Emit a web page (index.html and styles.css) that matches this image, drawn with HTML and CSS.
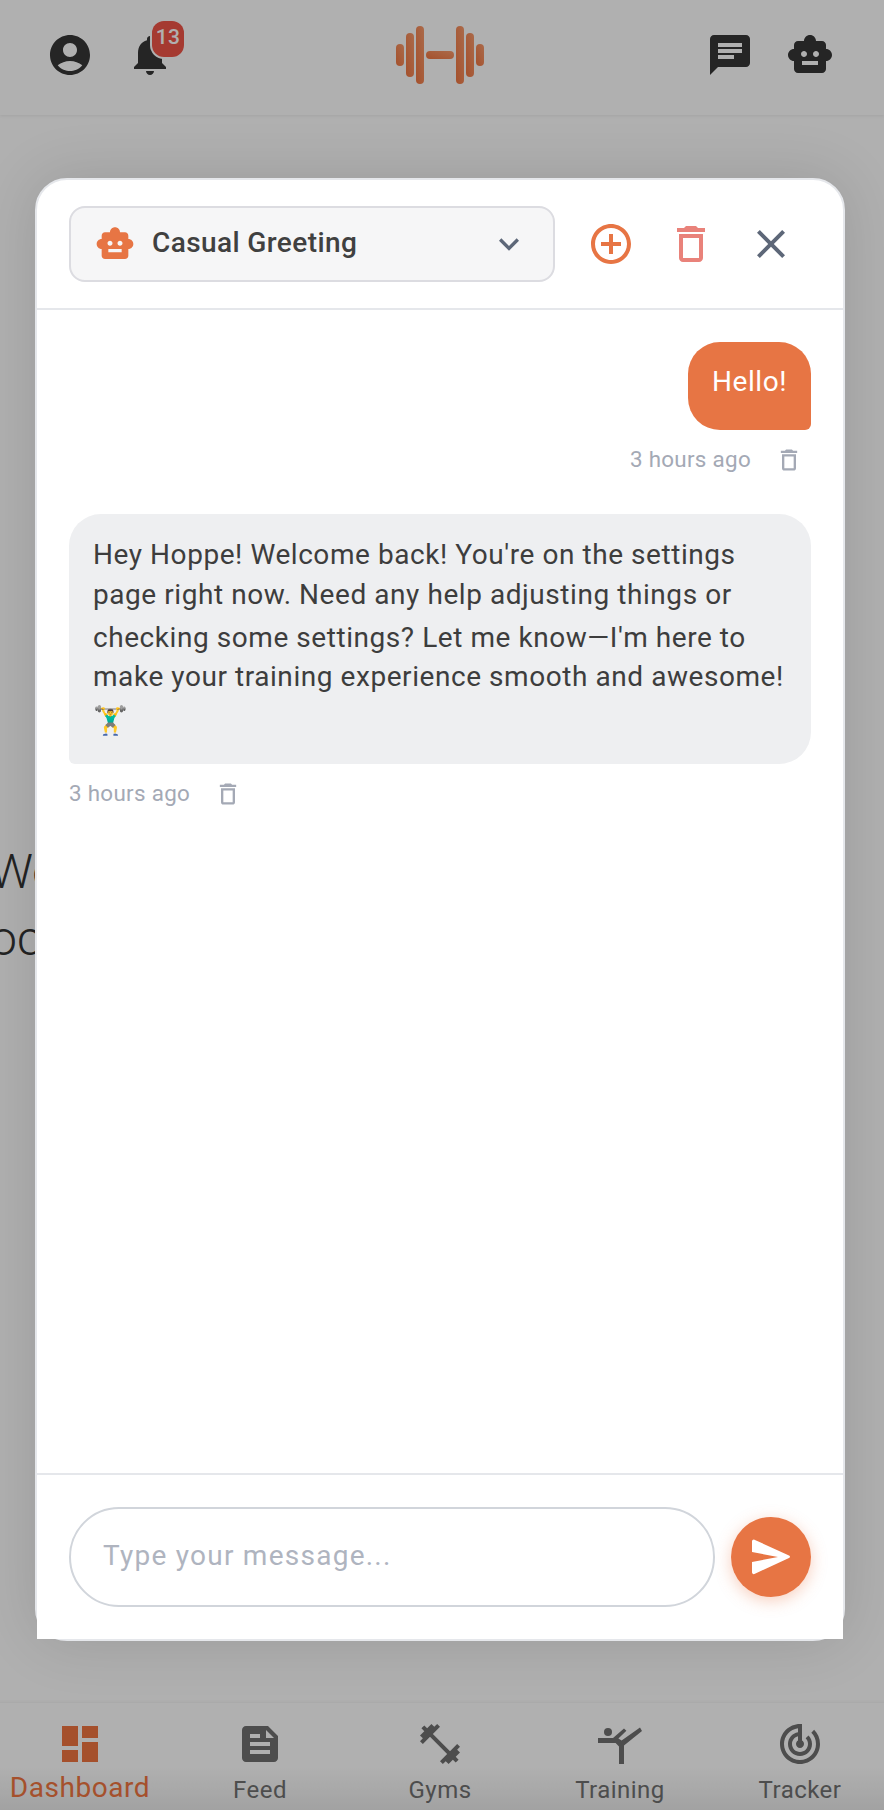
FILE: index.html
```html
<!DOCTYPE html>
<html lang="en">
<head>
<meta charset="utf-8">
<title>Chat</title>
<link rel="stylesheet" href="styles.css">
</head>
<body>
<div class="app">
  <header class="topbar">
    <div class="top-left">
      <svg class="top-icon" viewBox="0 0 24 24"><path d="M12 2C6.48 2 2 6.48 2 12s4.48 10 10 10 10-4.48 10-10S17.52 2 12 2zm0 4c1.93 0 3.5 1.57 3.5 3.5S13.93 13 12 13s-3.500-1.57-3.500-3.500S10.070 6 12 6zm0 14c-2.030 0-4.430-.82-6.140-2.880C7.550 15.800 9.680 15 12 15s4.450.8 6.140 2.120C16.430 19.180 14.030 20 12 20z"/></svg>
      <div class="bell">
        <svg class="top-icon" viewBox="0 0 24 24"><path d="M12 22c1.100 0 2-.9 2-2h-4c0 1.100.9 2 2 2zm6-6v-5c0-3.070-1.630-5.640-4.500-6.320V4c0-.83-.67-1.500-1.500-1.500s-1.500.67-1.500 1.500v.68C7.640 5.360 6 7.920 6 11v5l-2 2v1h16v-1l-2-2z"/></svg>
        <span class="badge">13</span>
      </div>
    </div>
    <svg class="logo" viewBox="0 0 88 58"><defs><linearGradient id="lg" x1="0" y1="1" x2="1" y2="0"><stop offset="0" stop-color="#ef7540"/><stop offset="1" stop-color="#f79a6c"/></linearGradient></defs><g fill="url(#lg)"><rect x="0" y="18" width="8" height="22" rx="4"/><rect x="10" y="7" width="8" height="44" rx="4"/><rect x="20" y="0" width="8" height="58" rx="4"/><rect x="30" y="25" width="28" height="8" rx="4"/><rect x="60" y="0" width="8" height="58" rx="4"/><rect x="70" y="7" width="8" height="44" rx="4"/><rect x="80" y="18" width="8" height="22" rx="4"/></g></svg>
    <div class="top-right">
      <svg class="top-icon" viewBox="0 0 24 24"><path d="M20 2H4c-1.100 0-2 .9-2 2v18l4-4h14c1.100 0 2-.9 2-2V4c0-1.100-.9-2-2-2zM6 9h12v2H6V9zm8 5H6v-2h8v2zm4-6H6V6h12v2z"/></svg>
      <svg class="top-icon" viewBox="0 0 24 24"><path d="M20 9V7c0-1.100-.9-2-2-2h-3c0-1.660-1.340-3-3-3S9 3.340 9 5H6c-1.100 0-2 .9-2 2v2c-1.660 0-3 1.340-3 3s1.340 3 3 3v4c0 1.100.9 2 2 2h12c1.100 0 2-.9 2-2v-4c1.660 0 3-1.340 3-3s-1.340-3-3-3zM7.500 11.500C7.500 10.670 8.170 10 9 10s1.500.67 1.500 1.500S9.830 13 9 13s-1.500-.67-1.500-1.500zM16 17H8v-2h8v2zm-1-4c-.83 0-1.500-.67-1.500-1.500S14.170 10 15 10s1.500.67 1.500 1.500S15.830 13 15 13z"/></svg>
    </div>
  </header>

  <div class="backdrop-text"><p>We</p><p>oc</p></div>

  <nav class="bottomnav">
    <div class="nav-item active">
      <svg class="nav-icon" viewBox="0 0 24 24"><path d="M3 13h8V3H3v10zm0 8h8v-6H3v6zm10 0h8V11h-8v10zm0-18v6h8V3h-8z"/></svg>
      <span class="nav-label">Dashboard</span>
    </div>
    <div class="nav-item">
      <svg class="nav-icon" viewBox="0 0 24 24"><path d="M16 3H5c-1.100 0-2 .9-2 2v14c0 1.100.9 2 2 2h14c1.100 0 2-.9 2-2V8l-5-5zM7 7h5v2H7V7zm10 10H7v-2h10v2zm0-4H7v-2h10v2zm-2-4V5l4 4h-4z"/></svg>
      <span class="nav-label">Feed</span>
    </div>
    <div class="nav-item">
      <svg class="nav-icon" viewBox="0 0 24 24"><path d="M20.570 14.860L22 13.430 20.570 12 17 15.570 8.430 7 12 3.430 10.570 2 9.140 3.430 7.710 2 5.570 4.140 4.140 2.710 2.710 4.140l1.430 1.430L2 7.710l1.430 1.430L2 10.570 3.430 12 7 8.430 15.570 17 12 20.570 13.430 22l1.430-1.430L16.290 22l2.140-2.140 1.430 1.430 1.430-1.430-1.430-1.430L22 16.290z"/></svg>
      <span class="nav-label">Gyms</span>
    </div>
    <div class="nav-item">
      <svg class="nav-icon" viewBox="0 0 24 24"><path d="M1 9h7.500L14 4.200l1.200 1.200-4 3.900 1.600.9L22 3.800l1 1.700-9 7.300V22h-2.500v-8.800L9.800 11.500H1z"/><circle cx="6" cy="6" r="2"/></svg>
      <span class="nav-label">Training</span>
    </div>
    <div class="nav-item">
      <svg class="nav-icon" viewBox="0 0 24 24"><path d="M19.070 4.930l-1.410 1.410C19.110 7.790 20 9.790 20 12c0 4.420-3.580 8-8 8s-8-3.580-8-8c0-4.080 3.050-7.440 7-7.930v2.020C8.160 6.570 6 9.030 6 12c0 3.310 2.690 6 6 6s6-2.690 6-6c0-1.660-.67-3.160-1.760-4.240l-1.410 1.410C15.550 9.900 16 10.900 16 12c0 2.210-1.790 4-4 4s-4-1.790-4-4c0-1.860 1.280-3.410 3-3.860v2.140c-.6.350-1 .98-1 1.720 0 1.100.9 2 2 2s2-.9 2-2c0-.74-.4-1.380-1-1.720V2h-1C6.480 2 2 6.480 2 12s4.480 10 10 10 10-4.480 10-10c0-2.760-1.120-5.260-2.930-7.070z"/></svg>
      <span class="nav-label">Tracker</span>
    </div>
  </nav>

  <div class="overlay"></div>

  <section class="panel">
    <div class="panel-head">
      <div class="select">
        <svg class="select-robot" viewBox="0 0 24 24"><path d="M20 9V7c0-1.100-.9-2-2-2h-3c0-1.660-1.340-3-3-3S9 3.340 9 5H6c-1.100 0-2 .9-2 2v2c-1.660 0-3 1.340-3 3s1.340 3 3 3v4c0 1.100.9 2 2 2h12c1.100 0 2-.9 2-2v-4c1.660 0 3-1.340 3-3s-1.340-3-3-3zM7.500 11.500C7.500 10.670 8.170 10 9 10s1.500.67 1.500 1.500S9.830 13 9 13s-1.500-.67-1.500-1.500zM16 17H8v-2h8v2zm-1-4c-.83 0-1.500-.67-1.500-1.500S14.170 10 15 10s1.500.67 1.500 1.500S15.830 13 15 13z"/></svg>
        <span class="select-label">Casual Greeting</span>
        <svg class="chev" viewBox="0 0 24 24"><path d="M7.410 8.590L12 13.170l4.590-4.580L18 10l-6 6-6-6z"/></svg>
      </div>
      <svg class="h-icon add" viewBox="0 0 24 24"><path d="M13 7h-2v4H7v2h4v4h2v-4h4v-2h-4V7zm-1-5C6.480 2 2 6.480 2 12s4.480 10 10 10 10-4.480 10-10S17.520 2 12 2zm0 18c-4.410 0-8-3.590-8-8s3.590-8 8-8 8 3.590 8 8-3.590 8-8 8z"/></svg>
      <svg class="h-icon del" viewBox="0 0 24 24"><path d="M6 19c0 1.100.9 2 2 2h8c1.100 0 2-.9 2-2V7H6v12zM8 9h8v10H8V9zm7.500-5l-1-1h-5l-1 1H5v2h14V4z"/></svg>
      <svg class="h-icon close" viewBox="0 0 24 24"><path d="M19 6.410L17.590 5 12 10.590 6.410 5 5 6.410 10.590 12 5 17.590 6.410 19 12 13.410 17.590 19 19 17.590 13.410 12z"/></svg>
    </div>

    <div class="messages">
      <div class="msg mine">
        <div class="bubble user">Hello!</div>
        <div class="meta"><span class="meta-time">3 hours ago</span><svg class="meta-del" viewBox="0 0 24 24"><path d="M6 19c0 1.100.9 2 2 2h8c1.100 0 2-.9 2-2V7H6v12zM8 9h8v10H8V9zm7.500-5l-1-1h-5l-1 1H5v2h14V4z"/></svg></div>
      </div>
      <div class="msg">
        <div class="bubble bot">
          <span class="bot-block">Hey Hoppe! Welcome back! You're on the settings page right now. Need any help adjusting things or</span>
          <span class="bot-block later">checking some settings? Let me know—I'm here to make your training experience smooth and awesome!</span>
          <span class="bot-block emoji">🏋️‍♂️</span>
        </div>
        <div class="meta"><span class="meta-time">3 hours ago</span><svg class="meta-del" viewBox="0 0 24 24"><path d="M6 19c0 1.100.9 2 2 2h8c1.100 0 2-.9 2-2V7H6v12zM8 9h8v10H8V9zm7.500-5l-1-1h-5l-1 1H5v2h14V4z"/></svg></div>
      </div>
    </div>

    <div class="composer">
      <div class="input">Type your message...</div>
      <button class="send" type="button"><svg viewBox="0 0 40 36"><path d="M1 2.500c0-1.300 1.200-2.200 2.400-1.800L38 16.600c1.300.6 1.300 1.900 0 2.500L3.400 35c-1.200.5-2.400-.4-2.400-1.700V23L27 18 1 13z"/></svg></button>
    </div>
  </section>
</div>
</body>
</html>
```
FILE: styles.css
```css
* { box-sizing: border-box; }
html, body { margin: 0; padding: 0; }
body { font-family: Roboto, "Noto Sans", sans-serif; background: #fff; }
.app { position: relative; width: 884px; height: 1810px; overflow: hidden; background: #fff; }

.topbar { position: relative; height: 115px; display: flex; align-items: center; padding: 0 50px 5px 46px; background: #fff; box-shadow: 0 1px 3px rgba(0,0,0,.08); }
.top-left, .top-right { display: flex; align-items: center; gap: 32px; flex: 1; }
.top-right { justify-content: flex-end; }
.top-icon { width: 48px; height: 48px; fill: #363636; display: block; }
.bell { position: relative; width: 48px; height: 48px; }
.badge { position: absolute; left: 26px; top: -10px; width: 32px; height: 36px; border-radius: 12px; background: #f05447; box-shadow: 0 0 0 2px #fff; color: #fff; font-size: 21px; font-weight: 500; letter-spacing: .4px; text-align: center; line-height: 33px; }
.logo { width: 88px; height: 58px; flex: none; }

.backdrop-text { position: absolute; left: -10px; top: 838px; font-size: 48px; font-weight: 300; color: #333; }
.backdrop-text p { margin: 0; line-height: 67px; white-space: nowrap; }

.bottomnav { position: absolute; left: -10px; bottom: 0; width: 900px; height: 107px; padding-top: 17px; display: grid; grid-template-columns: repeat(5, 1fr); background: linear-gradient(#fff 60%, #ebebeb); box-shadow: 0 -1px 3px rgba(0,0,0,.05); }
.nav-item { display: flex; flex-direction: column; align-items: center; color: #707070; }
.nav-icon { width: 48px; height: 48px; fill: #707070; display: block; flex: none; }
.nav-label { font-size: 24px; line-height: 28px; margin-top: 8px; letter-spacing: .48px; }
.active { color: #ef7540; }
.active .nav-icon { fill: #ef7540; }
.active .nav-label { font-size: 28px; line-height: 32px; margin-top: 4px; letter-spacing: .56px; }

.overlay { position: absolute; inset: 0; background: rgba(0,0,0,.31); }

.panel { position: absolute; left: 35px; top: 178px; width: 810px; height: 1463px; background: #fff; border: 2px solid #e5e7eb; border-radius: 32px; display: flex; flex-direction: column; box-shadow: 0 0 60px rgba(0,0,0,.13); }
.panel-head { height: 130px; flex: none; display: flex; align-items: center; padding-left: 32px; border-bottom: 2px solid #e5e7eb; }
.select { width: 486px; height: 76px; display: flex; align-items: center; padding: 0 24px; background: #f6f6f7; border: 2px solid #dcdce1; border-radius: 16px; }
.select-robot { width: 40px; height: 40px; fill: #e77544; flex: none; }
.select-label { flex: 1; margin-left: 17px; padding-bottom: 3px; font-size: 28px; font-weight: 500; letter-spacing: .4px; color: #404040; }
.chev { width: 40px; height: 40px; fill: #5d6778; flex: none; }
.h-icon { width: 48px; height: 48px; flex: none; margin-left: 32px; }
.add { fill: #e77544; }
.del { fill: #e9827a; }
.close { fill: #5d6778; }

.messages { flex: 1; padding: 32px 32px 0; display: flex; flex-direction: column; gap: 40px; }
.msg { display: flex; flex-direction: column; align-items: flex-start; }
.msg.mine { align-items: flex-end; }
.bubble { font-size: 28px; letter-spacing: .56px; }
.user { padding: 20px 24px 28px; background: #e77544; color: #fff; border-radius: 32px 32px 6px 32px; line-height: 40px; }
.bot { padding: 21px 24px 24px; background: #eeeff1; color: #3d3d3d; border-radius: 32px 32px 32px 6px; line-height: 39.5px; }
.bot-block { display: block; }
.later { margin-top: 3.5px; }
.emoji { margin-top: 4px; }
.meta { display: flex; align-items: center; gap: 24px; margin-top: 16px; height: 28px; padding-right: 8px; color: #a4a9b5; font-size: 22.4px; letter-spacing: .3px; }
.meta-time { margin-bottom: 3px; }
.meta-del { width: 28px; height: 28px; fill: #a4a9b5; }

.composer { height: 166px; flex: none; display: flex; align-items: center; padding: 0 32px; gap: 16px; border-top: 2px solid #e5e7eb; background: #fff; }
.input { flex: 1; height: 100px; border: 2px solid #d1d5db; border-radius: 50px; padding: 0 32px 4px; display: flex; align-items: center; font-size: 28px; letter-spacing: 1.25px; color: #afb4bf; }
.send { width: 80px; height: 80px; flex: none; border: 0; border-radius: 50%; background: #e77544; box-shadow: 0 4px 16px rgba(231,117,68,.35); display: flex; align-items: center; justify-content: center; padding: 0; }
.send svg { width: 40px; height: 36px; fill: #fff; }
```
